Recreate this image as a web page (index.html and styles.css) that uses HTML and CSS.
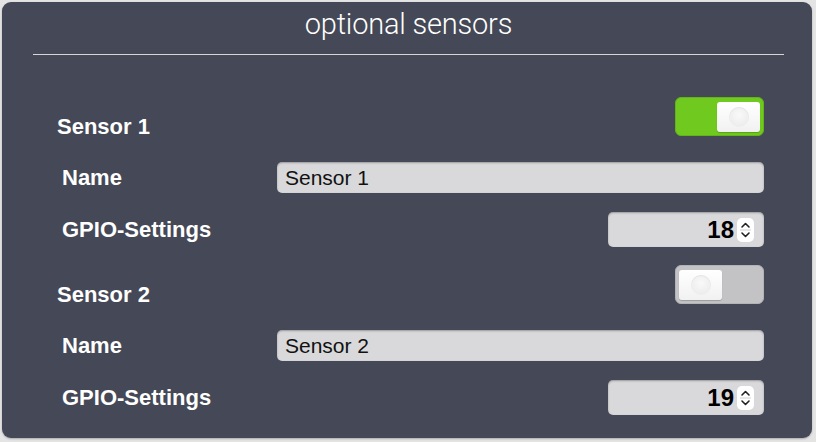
FILE: index.html
```html
<!DOCTYPE html>
<html>
<head>
<meta charset="utf-8">
<link rel="stylesheet" href="styles.css">
</head>
<body>
<div class="panel">
  <h1 class="title">optional sensors</h1>
  <div class="sections">
    <div class="section">
      <div class="row head">
        <span class="label main">Sensor 1</span>
        <span class="toggle on"><span class="knob"><span class="dot"></span></span></span>
      </div>
      <div class="row sub name-row">
        <span class="label">Name</span>
        <span class="text-input">Sensor 1</span>
      </div>
      <div class="row sub gpio-row">
        <span class="label">GPIO-Settings</span>
        <span class="num-input"><span class="num">18</span><span class="spin"><svg width="17" height="24" viewBox="0 0 17 24"><path d="M5 9 L8.5 5.5 L12 9" fill="none" stroke="#222" stroke-width="1.6" stroke-linecap="round" stroke-linejoin="round"/><path d="M3 12 H14" stroke="#d0d0d0" stroke-width="1"/><path d="M5 15 L8.5 18.5 L12 15" fill="none" stroke="#222" stroke-width="1.6" stroke-linecap="round" stroke-linejoin="round"/></svg></span></span>
      </div>
    </div>
    <div class="section">
      <div class="row head">
        <span class="label main">Sensor 2</span>
        <span class="toggle off"><span class="knob"><span class="dot"></span></span></span>
      </div>
      <div class="row sub name-row">
        <span class="label">Name</span>
        <span class="text-input">Sensor 2</span>
      </div>
      <div class="row sub gpio-row">
        <span class="label">GPIO-Settings</span>
        <span class="num-input"><span class="num">19</span><span class="spin"><svg width="17" height="24" viewBox="0 0 17 24"><path d="M5 9 L8.5 5.5 L12 9" fill="none" stroke="#222" stroke-width="1.6" stroke-linecap="round" stroke-linejoin="round"/><path d="M3 12 H14" stroke="#d0d0d0" stroke-width="1"/><path d="M5 15 L8.5 18.5 L12 15" fill="none" stroke="#222" stroke-width="1.6" stroke-linecap="round" stroke-linejoin="round"/></svg></span></span>
      </div>
    </div>
  </div>
</div>
</body>
</html>
```
FILE: styles.css
```css
* { box-sizing: border-box; }
html, body { margin: 0; padding: 0; }
body {
  background: #e4e4e4;
  width: 816px;
  height: 442px;
  padding: 2px 4px 4px 2px;
  font-family: "Liberation Sans", Arial, sans-serif;
}
.panel {
  background: #454856;
  border-radius: 9px;
  height: 436px;
  width: 810px;
  padding: 0 28px 0 31px;
  box-shadow: 0 1px 2px rgba(0,0,0,0.25);
}
.title {
  margin: 0;
  height: 53px;
  border-bottom: 1px solid #d6d6d8;
  text-align: center;
  color: #ffffff;
  font-family: Roboto, "Liberation Sans", sans-serif;
  font-weight: 300;
  font-size: 29px;
  line-height: 44px;
  padding-top: 0;
  letter-spacing: -0.2px;
}
.sections {
  padding: 42px 20px 0 24px;
  display: flex;
  flex-direction: column;
  gap: 18px;
}
.section {
  display: flex;
  flex-direction: column;
}
.row {
  display: flex;
  justify-content: space-between;
  align-items: center;
}
.row.head { align-items: flex-end; }
.row.sub { padding-left: 5px; }
.name-row { margin-top: 26px; }
.gpio-row { margin-top: 19px; }
.label {
  color: #ffffff;
  font-weight: bold;
  font-size: 22px;
  line-height: 24px;
}
.label.main { margin-bottom: -3px; }
.toggle {
  width: 89px;
  height: 39px;
  border-radius: 6px;
  display: flex;
  align-items: center;
  padding: 0 3px;
}
.toggle.on {
  background: #70c91e;
  border: 1px solid #62b418;
  justify-content: flex-end;
}
.toggle.off {
  background: #c3c3c6;
  border: 1px solid #b3b3b6;
  justify-content: flex-start;
}
.knob {
  width: 43px;
  height: 30px;
  border-radius: 3px;
  background: linear-gradient(#ffffff, #f1f1f1);
  box-shadow: 0 1px 1px rgba(0,0,0,0.2);
  display: flex;
  align-items: center;
  justify-content: center;
}
.dot {
  width: 20px;
  height: 20px;
  border-radius: 50%;
  background: radial-gradient(circle at 50% 40%, #f9f9f9, #e8e8e8);
  box-shadow: inset 0 1px 1px rgba(0,0,0,0.06);
}
.text-input {
  width: 487px;
  height: 31px;
  border-radius: 5px;
  background: #d9d9db;
  box-shadow: inset 0 1px 2px rgba(0,0,0,0.3);
  color: #111;
  font-size: 21px;
  line-height: 31px;
  padding-left: 8px;
}
.num-input {
  width: 156px;
  height: 35px;
  border-radius: 5px;
  background: #d9d9db;
  box-shadow: inset 0 1px 2px rgba(0,0,0,0.3);
  display: flex;
  align-items: center;
  justify-content: flex-end;
  padding-right: 10px;
  gap: 3px;
}
.num {
  color: #000;
  font-weight: bold;
  font-size: 24px;
  line-height: 35px;
}
.spin {
  width: 17px;
  height: 24px;
  border-radius: 5px;
  background: #ffffff;
  display: flex;
}
```
